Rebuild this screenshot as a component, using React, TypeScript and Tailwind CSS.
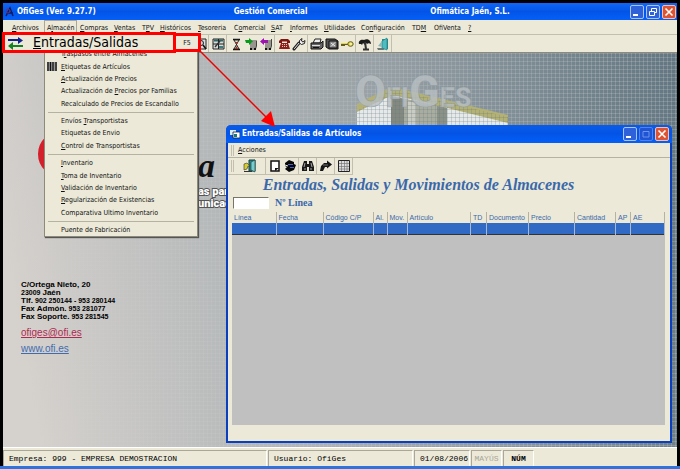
import type { ReactNode } from 'react'
import clsx from 'clsx'

const menuItems = [
  { label: '&Archivos', width: 'w-[35px]' },
  { label: 'A&lmacén', width: 'w-[33px]', open: true },
  { label: '&Compras', width: 'w-[34px]' },
  { label: '&Ventas', width: 'w-[28px]' },
  { label: 'T&PV', width: 'w-[18px]' },
  { label: '&Históricos', width: 'w-[38px]' },
  { label: '&Tesoreria', width: 'w-[36px]' },
  { label: 'C&omercial', width: 'w-[37px]' },
  { label: '&SAT', width: 'w-[19px]' },
  { label: '&Informes', width: 'w-[34px]' },
  { label: '&Utilidades', width: 'w-[37px]' },
  { label: 'Co&nfiguración', width: 'w-[51px]' },
  { label: 'TD&M', width: 'w-[22px]' },
  { label: 'OfiVenta', width: 'w-[34px]' },
  { label: '&?', width: 'w-[12px]' },
]

const menuGroups = [
  {
    height: 'h-[62px]',
    items: [
      'T&raspasos entre Almacenes',
      '&Etiquetas de Artículos',
      '&Actualización de Precios',
      'Actualización de &Precios por Familias',
      'Recalculado de Precios de Escandallo',
    ],
  },
  {
    height: 'h-[37px]',
    items: ['Envíos &Transportistas', 'Etiquetas de Envio', '&Control de Transportistas'],
  },
  {
    height: 'h-[62px]',
    items: [
      '&Inventario',
      '&Toma de Inventario',
      '&Validación de Inventario',
      '&Regularización de Existencias',
      'Comparativa Ultimo Inventario',
    ],
  },
  { height: 'h-[12px]', items: ['Puente de Fabricación'] },
]

const columns = [
  { label: 'Línea', width: 'w-[44px]' },
  { label: 'Fecha', width: 'w-[47px]' },
  { label: 'Código C/P', width: 'w-[50px]' },
  { label: 'Al.', width: 'w-[14px]' },
  { label: 'Mov.', width: 'w-[20px]' },
  { label: 'Artículo', width: '' },
  { label: 'TD', width: 'w-[16px]' },
  { label: 'Documento', width: 'w-[42px]' },
  { label: 'Precio', width: 'w-[46px]' },
  { label: 'Cantidad', width: 'w-[41px]' },
  { label: 'AP', width: 'w-[15px]' },
  { label: 'AE', width: 'w-[34px]' },
]

// The letter after "&" is the access key
function Mnemonic({ text }: { text: string }) {
  const at = text.indexOf('&')
  if (at < 0) return <>{text}</>
  return (
    <>
      {text.slice(0, at)}
      <span className="underline decoration-1 underline-offset-1">{text[at + 1]}</span>
      {text.slice(at + 2)}
    </>
  )
}

function Icon({ children }: { children: ReactNode }) {
  return (
    <svg viewBox="0 0 14 14" className="h-[14px] w-[14px] shrink-0" aria-hidden="true">
      {children}
    </svg>
  )
}

const icons = {
  preview: (
    <Icon>
      <path d="M4 2h9v10H4z" fill="#ddd" stroke="#222" />
      <circle cx="8" cy="6" r="2.5" fill="#b8d8d8" stroke="#222" />
      <path d="M10 8l3 4" stroke="#111" strokeWidth="1.6" />
    </Icon>
  ),
  windows: (
    <Icon>
      <path d="M2 2h11v10H2z" fill="#d8dcd8" stroke="#222" />
      <path d="M3 3.500h4M8 3.500h4" stroke="#2d6464" strokeWidth="2" />
      <path d="M2 7h11M7.500 2v10" stroke="#222" />
      <path d="M9 4l-5 6" stroke="#333" strokeWidth="1.4" />
      <path d="M8 9h4v2H8z" fill="#3d7c7c" />
    </Icon>
  ),
  hourglass: (
    <Icon>
      <path d="M4 2.500h7M4 12.500h7" stroke="#111" strokeWidth="1.5" />
      <path d="M5 3l5 9H5l5-9z" fill="#e9e4d0" stroke="#222" />
      <path d="M6 5h3L7.500 7zM6 12l1.500-3L9 12z" fill="#b02a20" />
    </Icon>
  ),
  cartIn: (
    <Icon>
      <path d="M6 4h7M7 6v5M9 5v6M11 5v6M12.500 4v5l-1 3H6" stroke="#444" fill="none" />
      <path d="M1 3h4V1l4 3.500L5 8V6H2z" fill="#0c9a1c" />
      <path d="M6 12h2M10 12h2" stroke="#111" strokeWidth="2" />
    </Icon>
  ),
  cartOut: (
    <Icon>
      <path d="M6 4h7M7 6v5M9 5v6M11 5v6M12.500 2v7l-1 3H6" stroke="#444" fill="none" />
      <path d="M9 3H5V1L1 4.500 5 8V6h4z" fill="#a012b4" />
      <path d="M6 12h2M10 12h2" stroke="#111" strokeWidth="2" />
    </Icon>
  ),
  phone: (
    <Icon>
      <path d="M2 6V4l2-2h7l2 2v2h-3V4.500H5V6z" fill="#7e1714" />
      <path d="M4 6h7l2 6H2z" fill="#8f1f1a" />
      <path d="M5 7.500h5M5 9.500h5" stroke="#e6c9bd" strokeDasharray="1 1" />
    </Icon>
  ),
  wrench: (
    <Icon>
      <path d="M2 12l5-6" stroke="#222" strokeWidth="3" strokeLinecap="round" />
      <path d="M2.500 11.500l5-6" stroke="#eee" strokeLinecap="round" />
      <path d="M10 1.500L7.500 3.500v2.500l2 1.500 3-1 .5-3-2 1.500-1.500-1z" fill="#eee" stroke="#222" />
    </Icon>
  ),
  printer: (
    <Icon>
      <path d="M5 2h6l-1 4H3z" fill="#eee" stroke="#222" />
      <path d="M1 6h10l2-2v6l-2 2H1z" fill="#666" stroke="#111" />
      <path d="M2 8.500h8" stroke="#ddd" />
      <path d="M3 10.500h6" stroke="#111" />
    </Icon>
  ),
  safe: (
    <Icon>
      <path d="M1 2h9l3 2v8H4L1 10z" fill="#555" stroke="#111" />
      <path d="M4 4h8v7H4z" fill="#888" stroke="#111" />
      <path d="M6 6l4 3M10 5.500l-4 4" stroke="#eee" />
    </Icon>
  ),
  key: (
    <Icon>
      <path d="M1 7h8M2 7v2M4 7v2" stroke="#655c18" strokeWidth="2" />
      <path d="M1 6.500h8" stroke="#e4d848" />
      <ellipse cx="10.500" cy="7" rx="2.700" ry="2.300" fill="#ece060" stroke="#655c18" />
      <circle cx="11" cy="7" r=".8" fill="#fff" />
    </Icon>
  ),
  palm: (
    <Icon>
      <path d="M1 7c-1-3 2-5 5-4 3-2 7 0 7 4-2-1-3-1-4 0l-1-1-1 2-2-2-1 2-1-1z" fill="#1c1c1c" />
      <path d="M7 5l1 7M5 12.500h6" stroke="#333" strokeWidth="2" />
    </Icon>
  ),
  exit: (
    <Icon>
      <path d="M6 2h6v10H6z" fill="#2a8f93" />
      <path d="M6 4l5-3v12l-5-2z" fill="#4fbcc0" stroke="#157878" strokeWidth=".6" />
      <path d="M1 11h5l3 2H2z" fill="#6a7878" />
      <path d="M2 9l4-5v6z" fill="#8ab8b8" />
    </Icon>
  ),
  door: (
    <Icon>
      <path d="M6 1h6v11H6z" fill="#2d8787" stroke="#113b3b" />
      <path d="M8 3l4-2v12l-4-2z" fill="#77cccc" stroke="#113b3b" strokeWidth=".6" />
      <path d="M1 5l3-1 3 3H5l-1 3-3 1z" fill="#d4cc30" stroke="#333" strokeWidth=".6" />
      <path d="M1 12.500h8" stroke="#333" />
    </Icon>
  ),
  page: (
    <Icon>
      <path d="M3 2h8v10H3z" fill="#fff" stroke="#111" strokeWidth="1.500" />
      <path d="M7 12V9h4z" fill="#111" />
    </Icon>
  ),
  dial: (
    <Icon>
      <path d="M2 4l4-3 5 2v2l2 1-2 5-5 2-4-3 2-2-2-1z" fill="#080808" />
      <path d="M5 5.500h5M7 8.500h4" stroke="#4a63c0" />
      <path d="M2 6l3 1" stroke="#eee" />
    </Icon>
  ),
  binoculars: (
    <Icon>
      <path d="M3 2h3v3h2V2h3l2 6v4H8V8H6v4H1V8z" fill="#1a1a1a" />
      <path d="M4 4L3 8M10 4l1 4M3 10h2M9 10h2" stroke="#ccc" strokeWidth=".8" />
    </Icon>
  ),
  forward: (
    <Icon>
      <path d="M8 1.500l5 4-5 4V8H6l-2 4H1l1-5 3-3h3z" fill="#151515" />
      <path d="M4 6h5" stroke="#888" strokeWidth=".8" />
    </Icon>
  ),
  grid: (
    <Icon>
      <path d="M1.500 1.500h11v11h-11z" fill="#ddd" stroke="#222" />
      <path d="M4.500 2v10M7.500 2v10M10 2v10M2 4.500h10M2 7.500h10M2 10h10" stroke="#777" strokeWidth=".7" />
    </Icon>
  ),
}

type IconName = keyof typeof icons

const toolbarSections: IconName[][] = [
  ['windows'],
  ['hourglass', 'cartIn', 'cartOut'],
  ['phone', 'wrench'],
  ['printer', 'safe', 'key'],
  ['palm'],
  ['exit'],
]

const dialogSections: IconName[][] = [['page', 'dial'], ['binoculars'], ['forward'], ['grid']]

function ToolbarSection({ names }: { names: IconName[] }) {
  return (
    <div className="flex items-center border-r border-[#c2bfae] px-px">
      {names.map((name) => (
        <button key={name} type="button" aria-label={name} className="flex w-[15px] justify-center">
          {icons[name]}
        </button>
      ))}
    </div>
  )
}

function WindowButtons({ maxDisabled = false }: { maxDisabled?: boolean }) {
  const box = 'flex h-[14px] w-[14px] items-center justify-center rounded-[2px] border'
  return (
    <div className="flex gap-[2px]">
      <button type="button" aria-label="Minimizar" className={clsx(box, 'border-[#a9c3f5] bg-[#2f62d8]')}>
        <svg viewBox="0 0 12 12" className="h-3 w-3">
          <path d="M2 9h5" stroke="#fff" strokeWidth="2" />
        </svg>
      </button>
      <button
        type="button"
        aria-label="Maximizar"
        className={clsx(box, maxDisabled ? 'border-[#5580e4] bg-[#1f54d4]' : 'border-[#a9c3f5] bg-[#2f62d8]')}
      >
        <svg viewBox="0 0 12 12" className="h-3 w-3" fill="none">
          {maxDisabled ? (
            <path d="M3 3.500h6v5.500H3z" stroke="#6f94ea" />
          ) : (
            <path d="M4.500 5V2.500h5v4H7.500M2.500 5.500h5v4h-5z" stroke="#fff" />
          )}
        </svg>
      </button>
      <button type="button" aria-label="Cerrar" className={clsx(box, 'border-[#f0c0b4] bg-[#dc5433]')}>
        <svg viewBox="0 0 12 12" className="h-3 w-3">
          <path d="M2.500 2.500l7 7M9.500 2.500l-7 7" stroke="#fff" strokeWidth="1.600" />
        </svg>
      </button>
    </div>
  )
}

function TitleBar() {
  return (
    <header className="flex h-[17px] items-center bg-linear-to-b from-[#1167f5] via-[#0354e6] to-[#0560f8] pr-px pl-[2px] text-[8px] font-bold text-white">
      <svg viewBox="0 0 10 12" className="mr-[2px] h-3 w-[10px]" aria-hidden="true">
        <path d="M1 10L5 2l3 8M2 7h6" stroke="#0a1c66" strokeWidth="1.500" fill="none" />
        <circle cx="3" cy="5" r="2" stroke="#703070" fill="none" />
      </svg>
      <div className="grid flex-1 grid-cols-[217fr_197fr_200fr]">
        <h1>OfiGes (Ver. 9.27.7)</h1>
        <span>Gestión Comercial</span>
        <span>Ofimática Jaén, S.L.</span>
      </div>
      <WindowButtons />
    </header>
  )
}

function MenuBar() {
  return (
    <nav className="flex h-[15px] items-stretch border-b border-[#c2bfae] pl-[6px]">
      {menuItems.map(({ label, width, open }) => (
        <button
          key={label}
          type="button"
          className={clsx(
            'flex items-center border border-b-0 pl-[2px] whitespace-nowrap',
            width,
            open ? 'border-[#aaa798]' : 'border-transparent',
          )}
        >
          <span>
            <Mnemonic text={label} />
          </span>
        </button>
      ))}
    </nav>
  )
}

function Artwork() {
  return (
    <svg className="absolute top-0 left-0 h-[200px] w-[520px]" viewBox="0 0 520 200" aria-hidden="true">
      <defs>
        <pattern id="mesh" width="4" height="4" patternUnits="userSpaceOnUse">
          <path d="M0 .5h4M.5 0v4" stroke="#687880" strokeOpacity=".25" />
        </pattern>
      </defs>
      <path d="M354 58L389 42l116 24v20H354z" fill="#e6e9ea" />
      <path d="M388 43l55 11v32h-55z" fill="#a9ada0" />
      <path d="M388 43l13 3v40h-13z" fill="#83897f" />
      <path d="M405 48l8 2v36h-8z" fill="#c9ccc0" />
      <path d="M434 53l10 2v31h-10z" fill="#8b9186" />
      <path d="M354 51l30-15q6-2 14 0l107 26v8L396 43q-7-1-13 2l-29 14z" fill="#b3b173" />
      <path d="M354 58L389 36l116 28v22H354z" fill="url(#mesh)" />
      <text
        x="352"
        y="54"
        fontFamily="Roboto, sans-serif"
        fontWeight="900"
        fontSize="45"
        fill="#b9c0c4"
        fillOpacity=".8"
        stroke="#8a959b"
        strokeOpacity=".7"
        strokeWidth=".7"
      >
        O<tspan fontSize="27">FI</tspan>G<tspan fontSize="27">ES</tspan>
      </text>
      <circle cx="58" cy="101" r="20" fill="none" stroke="#d3202a" strokeWidth="6" />
      <text x="195" y="124" fontFamily="'Liberation Serif', serif" fontStyle="italic" fontWeight="700" fontSize="34" fill="#111">
        a
      </text>
      <g fontFamily="Roboto, sans-serif" fontWeight="900" fontSize="11" fill="#fff" stroke="#555" strokeWidth="2" paintOrder="stroke">
        <text x="195" y="142">as para</text>
        <text x="195" y="154">unicació</text>
      </g>
    </svg>
  )
}

function AlmacenMenu() {
  return (
    <div className="absolute top-[36px] left-[44px] w-[154px] border border-t-0 border-[#8d8a7c] bg-[#ece9d8] pt-[12px] shadow-[1px_1px_1px_#555]">
      {menuGroups.map(({ height, items }, group) => (
        <div key={items[0]}>
          {group > 0 && <hr className="mx-[3px] my-[2px] border-[#b5b2a2]" />}
          <div className={clsx('grid auto-rows-fr', height)}>
            {items.map((item) => (
              <button key={item} type="button" className="flex items-center pl-[2px] text-left whitespace-nowrap">
                <span className="flex w-[14px] shrink-0">
                  {item === '&Etiquetas de Artículos' && (
                    <svg viewBox="0 0 10 9" className="h-[9px] w-[10px]" aria-hidden="true">
                      <path d="M0 0h10v9H0z" fill="#999" />
                      <path d="M1 0v9M3.500 0v9M6 0v9M9 0v9" stroke="#111" strokeWidth="1.300" />
                    </svg>
                  )}
                </span>
                <span>
                  <Mnemonic text={item} />
                </span>
              </button>
            ))}
          </div>
        </div>
      ))}
    </div>
  )
}

function HighlightedEntry() {
  return (
    <button type="button" className="absolute top-[32px] left-[2px] flex h-[21px] items-center text-left">
      <span className="flex h-[21px] w-[174px] items-center border-3 border-[#f00] bg-[#ece9d8]">
        <svg viewBox="0 0 18 14" className="mx-[2px] h-[14px] w-[18px]" aria-hidden="true">
          <path d="M1 3h10V1l5 3.500L11 8V5H1z" fill="#10208c" />
          <path d="M16 9H6V6L1 10l5 4v-3h10z" fill="#168024" />
        </svg>
        <span className="pl-[6px] text-[14px] leading-[15px] text-black">
          <Mnemonic text="&Entradas/Salidas" />
        </span>
      </span>
      <span className="-ml-[3px] flex h-[19px] w-[28px] items-center justify-center border-3 border-[#f00] bg-[#ece9d8]">
        F5
      </span>
    </button>
  )
}

function EntriesDialog() {
  return (
    <section className="absolute top-[72px] right-[5px] bottom-[4px] left-[223px] flex flex-col rounded-t-[5px] border-2 border-t-0 border-[#0a3fc0] bg-[#ece9d8]">
      <header className="-mx-[2px] flex h-[18px] items-center rounded-t-[5px] bg-linear-to-b from-[#0a5be8] via-[#0354e6] to-[#0560f8] pr-[3px] pl-[4px] text-[8px] font-bold text-white">
        <svg viewBox="0 0 10 10" className="mr-[2px] h-[10px] w-[10px]" aria-hidden="true">
          <path d="M0 1h6v5H0z" fill="#d8ecff" />
          <path d="M3 3h7v6H3z" fill="#fff" stroke="#123" strokeWidth=".8" />
          <path d="M4 5h3v3H4z" fill="#167a7a" />
        </svg>
        <h2 className="flex-1">Entradas/Salidas de Artículos</h2>
        <WindowButtons maxDisabled />
      </header>
      <div className="flex h-[15px] items-center border-b border-[#b5b2a2] pl-[3px]">
        <span className="mr-[4px] h-[11px] w-[3px] border-x border-[#c2bfae]" />
        <button type="button">
          <Mnemonic text="&Acciones" />
        </button>
      </div>
      <div className="flex h-[17px] self-start border-b border-[#c2bfae] pl-[3px]">
        <span className="my-[2px] w-[3px] border-x border-[#c2bfae]" />
        <button type="button" aria-label="Salir" className="flex w-[32px] items-center justify-center border-r border-[#c2bfae]">
          {icons.door}
        </button>
        {dialogSections.map((names) => (
          <ToolbarSection key={names[0]} names={names} />
        ))}
      </div>
      <h3 className="pr-[61px] text-center font-['Liberation_Serif',serif] text-[16px] leading-[20px] font-bold whitespace-nowrap text-[#3a68aa] italic">
        Entradas, Salidas y Movimientos de Almacenes
      </h3>
      <div className="flex h-[16px] items-center gap-[6px] pl-[5px]">
        <input
          id="linea"
          className="h-[12px] w-[36px] border border-t-[#77756a] border-r-white border-b-white border-l-[#77756a] bg-white text-[8px]"
        />
        <label htmlFor="linea" className="font-['Liberation_Serif',serif] text-[10px] font-bold text-[#3a68aa]">
          Nº Línea
        </label>
      </div>
      <div className="mt-px mr-[5px] mb-[16px] ml-[4px] flex-1 bg-[#c0c0c0]">
        <table className="w-full table-fixed border-collapse">
          <thead>
            <tr className="h-[11px] bg-[#ece9d8]">
              {columns.map(({ label, width }) => (
                <th
                  key={label}
                  className={clsx(
                    "border-r border-[#b5b2a2] p-0 pl-[2px] text-left font-['Liberation_Sans',sans-serif] text-[7px] leading-[10px] font-normal whitespace-nowrap text-[#3a68aa]",
                    width,
                  )}
                >
                  {label}
                </th>
              ))}
            </tr>
          </thead>
          <tbody>
            <tr className="h-[11px] border-b border-[#333] bg-[#316ac5]">
              {columns.map(({ label }) => (
                <td key={label} className="border-r border-[#a9b9d0] p-0" />
              ))}
            </tr>
          </tbody>
        </table>
      </div>
    </section>
  )
}

const contactLines = [
  { label: 'C/Ortega Nieto, 20' },
  { small: '23009', after: 'Jaén' },
  { label: 'Tlf.', small: '902 250144 - 953 280144' },
  { label: 'Fax Admón.', small: '953 281077' },
  { label: 'Fax Soporte.', small: '953 281545' },
]

function ContactInfo() {
  return (
    <address className="absolute top-[228px] left-[18px] font-['Liberation_Sans',sans-serif] text-black not-italic">
      {contactLines.map(({ label, small, after }) => (
        <p key={small ?? label} className="flex h-[8px] items-baseline gap-[2px] text-[8px] leading-[8px] font-bold">
          {label && <span>{label}</span>}
          {small && <span className="text-[7px]">{small}</span>}
          {after && <span>{after}</span>}
        </p>
      ))}
      <a href="#correo" className="mt-[6px] block text-[10px] leading-[12px] text-[#b02a50] underline">
        ofiges@ofi.es
      </a>
      <a href="#web" className="mt-[4px] block text-[10px] leading-[12px] text-[#3f6cb0] underline">
        www.ofi.es
      </a>
    </address>
  )
}

function StatusBar() {
  const cell = 'flex items-center border-t border-l border-[#aaa798] border-r border-r-white'
  return (
    <footer className="flex h-[19px] gap-px border-t border-white bg-[#ece9d8] pt-[2px] font-['Liberation_Mono',monospace] text-[8px] text-black">
      <div className={clsx(cell, 'flex-1 pl-[5px]')}>Empresa: 999 - EMPRESA DEMOSTRACION</div>
      <div className={clsx(cell, 'w-[145px] pl-[5px]')}>Usuario: OfiGes</div>
      <div className={clsx(cell, 'w-[56px] pl-[5px]')}>01/08/2006</div>
      <div className={clsx(cell, 'w-[31px] justify-center text-[#aaa798]')}>MAYÚS</div>
      <div className={clsx(cell, 'mr-[143px] w-[31px] justify-center font-bold')}>NÚM</div>
    </footer>
  )
}

export default function App() {
  return (
    <div className="relative flex min-h-screen flex-col bg-black pt-[3px] font-['DejaVu_Sans_Condensed','DejaVu_Sans',sans-serif] text-[7px] leading-[10px] text-[#111]">
      <div className="mr-[3px] ml-[3px] flex flex-1 flex-col bg-[#ece9d8]">
        <TitleBar />
        <MenuBar />
        <div className="flex h-[18px] border-b border-[#8d8a7c] pl-[188px]">
          <ToolbarSection names={['preview']} />
          {toolbarSections.map((names) => (
            <ToolbarSection key={names[0]} names={names} />
          ))}
        </div>
        <main className="relative flex-1 overflow-hidden bg-linear-[80deg] from-[#d5d1cd] from-5% via-[#a9afb2] via-45% to-[#637681]">
          <div className="absolute inset-0 bg-[linear-gradient(#ffffff28_1px,transparent_1px),linear-gradient(90deg,#ffffff28_1px,transparent_1px)] mask-l-from-10% bg-size-[4px_4px]" />
          <Artwork />
          <ContactInfo />
          <EntriesDialog />
        </main>
        <StatusBar />
      </div>
      <div className="h-[3px] bg-[#2f74dc]" />
      <AlmacenMenu />
      <HighlightedEntry />
      <svg className="pointer-events-none absolute top-[48px] left-[196px] h-[80px] w-[82px]" viewBox="0 0 82 80" aria-hidden="true">
        <path d="M3 2l68 68" stroke="#e00" strokeWidth="1.500" />
        <path d="M79 79L65 73l10-10z" fill="#f00" />
      </svg>
    </div>
  )
}
